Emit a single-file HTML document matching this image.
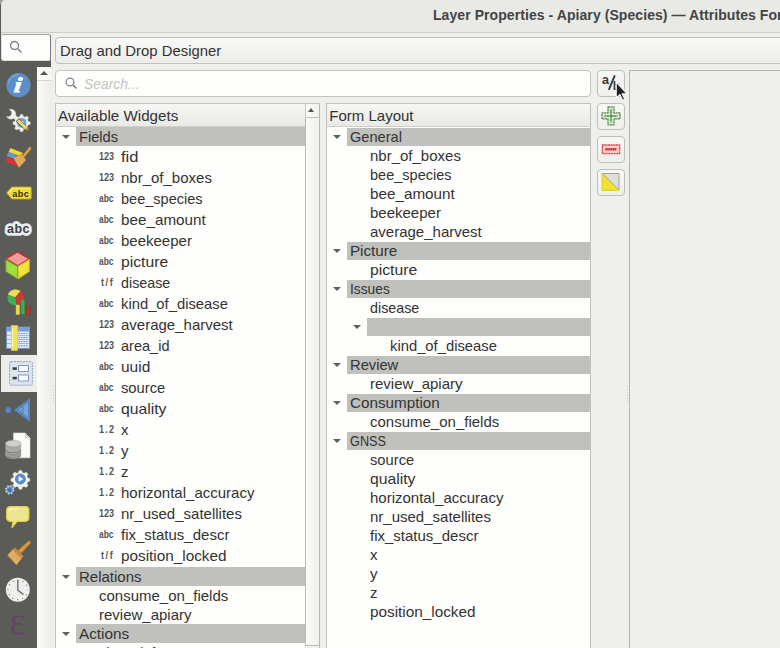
<!DOCTYPE html><html><head><meta charset="utf-8"><title>Layer Properties</title><style>
*{box-sizing:border-box;margin:0;padding:0}
html,body{width:780px;height:648px;overflow:hidden}
body{background:#efefec;font-family:"Liberation Sans",sans-serif;font-size:15px;color:#333;position:relative}
.abs{position:absolute}
.t{position:absolute;white-space:nowrap;line-height:20px;height:20px;transform-origin:0 50%}
.g{position:absolute;background:#c0c0bd}
.ic{position:absolute;font-size:10.3px;font-weight:bold;color:#555;line-height:20px;height:20px;transform-origin:0 50%;transform:scaleX(0.88)}
.ic.a{font-size:10px;transform:scaleX(0.84)}
.ic.d{letter-spacing:1.35px}
.ic.f{letter-spacing:1.8px}
.arr{position:absolute;width:0;height:0;border-left:4px solid transparent;border-right:4px solid transparent;border-top:4.5px solid #5e5e5c}
.btn{position:absolute;width:28px;height:27px;border:1px solid #bebeba;border-radius:4px;background:linear-gradient(#f7f7f5,#efefec)}
svg{position:absolute;overflow:visible}
</style></head><body>
<div class="abs" style="left:0;top:0;width:8px;height:60px;background:#5a5a58"></div>
<div class="abs" style="left:0;top:0;width:6px;height:5px;background:linear-gradient(135deg,#a0a0a0 35%,#555 55%)"></div>
<div class="abs" style="left:1px;top:0;width:779px;height:33px;background:#e9e9e6;border-top-left-radius:4px 5px;border-bottom:1px solid #cdcdc9"></div>
<div class="abs" style="left:1px;top:33px;width:8px;height:2px;background:#efefec"></div>
<div class="t" style="left:433px;top:5px;font-size:14px;font-weight:bold;color:#444;letter-spacing:0.07px">Layer Properties - Apiary (Species) — Attributes Form</div>
<div class="abs" style="left:0;top:60px;width:51px;height:7px;background:#5b5b58"></div>
<div class="abs" style="left:0;top:60px;width:37px;height:588px;background:#5b5b58"></div>
<div class="abs" style="left:1px;top:33.5px;width:50px;height:27px;background:#fdfdfb;border:1px solid #e0e0dc;border-top-color:#a0a09d;border-right-color:#777;border-radius:2px 2px 3px 3px"></div>
<svg style="left:9.1px;top:40.3px" width="14" height="14" viewBox="0 0 14 14"><circle cx="5.5" cy="5.5" r="4" fill="none" stroke="#808080" stroke-width="1.3"/><path d="M8.5 8.5L12.5 12.5" stroke="#808080" stroke-width="1.6"/></svg>
<div class="abs" style="left:37px;top:67px;width:15px;height:581px;background:linear-gradient(90deg,#fcfcfa,#f3f3f0 60%,#ececea)"></div>
<div class="abs" style="left:37px;top:67px;width:15px;height:14px;background:linear-gradient(90deg,#fcfcfa,#f3f3f0);border-bottom:1px solid #d8d8d4"></div>
<div class="abs" style="left:40px;top:71px;width:0;height:0;border-left:4px solid transparent;border-right:4px solid transparent;border-bottom:4px solid #555"></div>
<div class="abs" style="left:53px;top:386px;width:1px;height:17px;background:repeating-linear-gradient(#c4c4c0 0 1px,transparent 1px 3px)"></div>
<div class="abs" style="left:55px;top:37px;width:760px;height:27px;border:1px solid #c0c0bc;border-radius:4px;background:linear-gradient(#fafaf8,#ecece9)"></div>
<div class="t" style="left:60.3px;top:40.5px;transform:scaleX(0.992)">Drag and Drop Designer</div>
<div class="abs" style="left:55px;top:70px;width:536px;height:27px;border:1px solid #c2c2be;border-radius:4px;background:#fefefc"></div>
<svg style="left:64.300px;top:75.500px" width="14" height="14" viewBox="0 0 14 14"><circle cx="6" cy="6" r="3.900" fill="none" stroke="#858585" stroke-width="1.250"/><path d="M8.900 8.900L12.400 12.400" stroke="#858585" stroke-width="1.600"/></svg>
<div class="t" style="left:84px;top:74px;font-style:italic;color:#c4c4c1;transform:scaleX(0.925)">Search...</div>
<div class="abs" style="left:55px;top:103px;width:265px;height:560px;background:#fefefc;border:1px solid #c0c0bc"></div>
<div class="abs" style="left:56px;top:104px;width:249px;height:23px;background:linear-gradient(#f7f7f5,#e9e9e6);border-bottom:1px solid #cfcfcb"></div>
<div class="t" style="left:58px;top:106px;transform:scaleX(1.011)">Available Widgets</div>
<div class="abs" style="left:305px;top:104px;width:14px;height:544px;background:#f0f0ed"></div>
<div class="abs" style="left:305px;top:104px;width:14px;height:14px;background:linear-gradient(90deg,#fbfbf9,#f1f1ee);border-left:1px solid #c6c6c2;border-bottom:1px solid #c2c2be"></div>
<div class="abs" style="left:308.3px;top:108px;width:0;height:0;border-left:3.75px solid transparent;border-right:3.75px solid transparent;border-bottom:4px solid #555"></div>
<div class="abs" style="left:305px;top:118px;width:14px;height:528px;background:linear-gradient(90deg,#fbfbf9,#f0f0ed);border-left:1px solid #b8b8b4;border-bottom:1px solid #b8b8b4"></div>
<div class="abs" style="left:319px;top:104px;width:1px;height:544px;background:#b8b8b4"></div>
<div class="g" style="left:76px;top:127.25px;width:229px;height:18.5px"></div>
<div class="arr" style="left:62px;top:134.75px"></div>
<div class="t" style="left:79px;top:127.5px;line-height:18.5px;height:18.5px;transform:scaleX(0.975)">Fields</div>
<div class="ic" style="left:99.3px;top:147.1px">123</div>
<div class="t" style="left:121px;top:147.1px;transform:scaleX(1.105)">fid</div>
<div class="ic" style="left:99.3px;top:168.1px">123</div>
<div class="t" style="left:121px;top:168.1px">nbr_of_boxes</div>
<div class="ic a" style="left:99.3px;top:189.1px">abc</div>
<div class="t" style="left:121px;top:189.1px;transform:scaleX(0.969)">bee_species</div>
<div class="ic a" style="left:99.3px;top:210.1px">abc</div>
<div class="t" style="left:121px;top:210.1px;transform:scaleX(1.016)">bee_amount</div>
<div class="ic a" style="left:99.3px;top:231.1px">abc</div>
<div class="t" style="left:121px;top:231.1px">beekeeper</div>
<div class="ic a" style="left:99.3px;top:252.1px">abc</div>
<div class="t" style="left:121px;top:252.1px;transform:scaleX(1.049)">picture</div>
<div class="ic f" style="left:101px;top:273.1px">t/f</div>
<div class="t" style="left:121px;top:273.1px;transform:scaleX(0.953)">disease</div>
<div class="ic a" style="left:99.3px;top:294.1px">abc</div>
<div class="t" style="left:121px;top:294.1px;transform:scaleX(0.986)">kind_of_disease</div>
<div class="ic" style="left:99.3px;top:315.1px">123</div>
<div class="t" style="left:121px;top:315.1px">average_harvest</div>
<div class="ic" style="left:99.3px;top:336.1px">123</div>
<div class="t" style="left:121px;top:336.1px;transform:scaleX(0.969)">area_id</div>
<div class="ic a" style="left:99.3px;top:357.1px">abc</div>
<div class="t" style="left:121px;top:357.1px;transform:scaleX(1.031)">uuid</div>
<div class="ic a" style="left:99.3px;top:378.1px">abc</div>
<div class="t" style="left:121px;top:378.1px;transform:scaleX(0.983)">source</div>
<div class="ic a" style="left:99.3px;top:399.1px">abc</div>
<div class="t" style="left:121px;top:399.1px;transform:scaleX(1.049)">quality</div>
<div class="ic d" style="left:99.3px;top:420.1px">1.2</div>
<div class="t" style="left:121px;top:420.1px">x</div>
<div class="ic d" style="left:99.3px;top:441.1px">1.2</div>
<div class="t" style="left:121px;top:441.1px">y</div>
<div class="ic d" style="left:99.3px;top:462.1px">1.2</div>
<div class="t" style="left:121px;top:462.1px">z</div>
<div class="ic d" style="left:99.3px;top:483.1px">1.2</div>
<div class="t" style="left:121px;top:483.1px">horizontal_accuracy</div>
<div class="ic" style="left:99.3px;top:504.1px">123</div>
<div class="t" style="left:121px;top:504.1px">nr_used_satellites</div>
<div class="ic a" style="left:99.3px;top:525.1px">abc</div>
<div class="t" style="left:121px;top:525.1px">fix_status_descr</div>
<div class="ic f" style="left:101px;top:546.1px">t/f</div>
<div class="t" style="left:121px;top:546.1px;transform:scaleX(1.02)">position_locked</div>
<div class="g" style="left:76px;top:567.25px;width:229px;height:18.5px"></div>
<div class="arr" style="left:62px;top:574.75px"></div>
<div class="t" style="left:79px;top:567.5px;line-height:18.5px;height:18.5px">Relations</div>
<div class="t" style="left:99px;top:585.5px">consume_on_fields</div>
<div class="t" style="left:99px;top:604.5px">review_apiary</div>
<div class="g" style="left:76px;top:624.25px;width:229px;height:18.5px"></div>
<div class="arr" style="left:62px;top:631.75px"></div>
<div class="t" style="left:79px;top:624.5px;line-height:18.5px;height:18.5px;transform:scaleX(1.02)">Actions</div>
<div class="t" style="left:99px;top:642.5px;transform:scaleX(0.95)">show_info</div>
<div class="abs" style="left:326px;top:103px;width:265px;height:560px;background:#fefefc;border:1px solid #c0c0bc"></div>
<div class="abs" style="left:327px;top:104px;width:263px;height:23px;background:linear-gradient(#f7f7f5,#e9e9e6);border-bottom:1px solid #cfcfcb"></div>
<div class="t" style="left:329.3px;top:106px">Form Layout</div>
<div class="g" style="left:347px;top:127.65px;width:243px;height:18.5px"></div>
<div class="arr" style="left:333px;top:135.15px"></div>
<div class="t" style="left:350px;top:127.9px;line-height:18.5px;height:18.5px;transform:scaleX(0.974)">General</div>
<div class="t" style="left:370px;top:145.9px">nbr_of_boxes</div>
<div class="t" style="left:370px;top:164.9px;transform:scaleX(0.969)">bee_species</div>
<div class="t" style="left:370px;top:183.9px;transform:scaleX(1.016)">bee_amount</div>
<div class="t" style="left:370px;top:202.9px">beekeeper</div>
<div class="t" style="left:370px;top:221.9px">average_harvest</div>
<div class="g" style="left:347px;top:241.65px;width:243px;height:18.5px"></div>
<div class="arr" style="left:333px;top:249.15px"></div>
<div class="t" style="left:350px;top:241.9px;line-height:18.5px;height:18.5px;transform:scaleX(1.012)">Picture</div>
<div class="t" style="left:370px;top:259.9px;transform:scaleX(1.049)">picture</div>
<div class="g" style="left:347px;top:279.65px;width:243px;height:18.5px"></div>
<div class="arr" style="left:333px;top:287.15px"></div>
<div class="t" style="left:350px;top:279.9px;line-height:18.5px;height:18.5px;transform:scaleX(0.917)">Issues</div>
<div class="t" style="left:370px;top:297.9px;transform:scaleX(0.953)">disease</div>
<div class="g" style="left:367px;top:317.65px;width:223px;height:18.5px"></div>
<div class="arr" style="left:353px;top:325.15px"></div>
<div class="t" style="left:370px;top:317.9px;line-height:18.5px;height:18.5px"></div>
<div class="t" style="left:390px;top:335.9px;transform:scaleX(0.986)">kind_of_disease</div>
<div class="g" style="left:347px;top:355.65px;width:243px;height:18.5px"></div>
<div class="arr" style="left:333px;top:363.15px"></div>
<div class="t" style="left:350px;top:355.9px;line-height:18.5px;height:18.5px;transform:scaleX(0.981)">Review</div>
<div class="t" style="left:370px;top:373.9px">review_apiary</div>
<div class="g" style="left:347px;top:393.65px;width:243px;height:18.5px"></div>
<div class="arr" style="left:333px;top:401.15px"></div>
<div class="t" style="left:350px;top:393.9px;line-height:18.5px;height:18.5px;transform:scaleX(1.015)">Consumption</div>
<div class="t" style="left:370px;top:411.9px">consume_on_fields</div>
<div class="g" style="left:347px;top:431.65px;width:243px;height:18.5px"></div>
<div class="arr" style="left:333px;top:439.15px"></div>
<div class="t" style="left:350px;top:431.9px;line-height:18.5px;height:18.5px;transform:scaleX(0.847)">GNSS</div>
<div class="t" style="left:370px;top:449.9px;transform:scaleX(0.983)">source</div>
<div class="t" style="left:370px;top:468.9px;transform:scaleX(1.049)">quality</div>
<div class="t" style="left:370px;top:487.9px">horizontal_accuracy</div>
<div class="t" style="left:370px;top:506.9px">nr_used_satellites</div>
<div class="t" style="left:370px;top:525.9px">fix_status_descr</div>
<div class="t" style="left:370px;top:544.9px">x</div>
<div class="t" style="left:370px;top:563.9px">y</div>
<div class="t" style="left:370px;top:582.9px">z</div>
<div class="t" style="left:370px;top:601.9px;transform:scaleX(1.02)">position_locked</div>
<div class="abs" style="left:627px;top:386px;width:1px;height:17px;background:repeating-linear-gradient(#c4c4c0 0 1px,transparent 1px 3px)"></div>
<div class="btn" style="left:597px;top:70px"></div>
<div class="btn" style="left:597px;top:103px"></div>
<div class="btn" style="left:597px;top:136px"></div>
<div class="btn" style="left:597px;top:169px"></div>
<div class="abs" style="left:629px;top:70px;width:200px;height:600px;border:1px solid #b4b4b0"></div>
<!-- toolbar button icons -->
<svg style="left:597px;top:70px" width="34" height="34" viewBox="0 0 34 34">
 <text x="5" y="13.700" font-family="Liberation Sans, sans-serif" font-weight="bold" font-size="12.500px" fill="#3a3a3a">a</text>
 <path d="M17.800 5.400L11.800 19.800" stroke="#3a3a3a" stroke-width="1.900"/>
 <text x="15.800" y="19.600" font-family="Liberation Sans, sans-serif" font-weight="bold" font-size="12px" fill="#3a3a3a">b</text>
 <path d="M19.2 12V28L22.8 24.6L25.6 30.4L27.8 29.4L25.2 23.800H30.2Z" fill="#222" stroke="#f6f6f6" stroke-width="1.2" stroke-linejoin="round"/>
</svg>
<svg style="left:597px;top:103px" width="28" height="27" viewBox="0 0 28 27">
 <path d="M11 3.900h6v6h6v6h-6v6h-6v-6h-6v-6h6z" fill="#dfe5d8" stroke="#5f8a52" stroke-width="1.300" stroke-linejoin="round" stroke-dasharray="2.200 0.500"/>
 <path d="M14 6.400v13M7.500 12.900h13" stroke="#3f9640" stroke-width="1.500" stroke-dasharray="2 0.400"/>
</svg>
<svg style="left:597px;top:136px" width="28" height="27" viewBox="0 0 28 27">
 <rect x="5.400" y="9" width="17.200" height="8.600" fill="#f6cfcf" stroke="#df4a4a" stroke-width="1.400" stroke-dasharray="2.200 0.500"/>
 <path d="M8.300 13.300h11.400" stroke="#d62f2f" stroke-width="2.600" stroke-dasharray="1.600 0.300"/>
</svg>
<svg style="left:597px;top:169px" width="28" height="27" viewBox="0 0 28 27">
 <path d="M5.5 4.5H22V21Z" fill="#dededb" stroke="#a0a09c" stroke-width="1"/>
 <path d="M5 4.5V21.5H22Z" fill="#f0e22e" stroke="#d8c93a" stroke-width="0.8"/>
</svg>
<!-- sidebar icons -->
<!-- 1 info -->
<svg style="left:5.600px;top:73px" width="25" height="25" viewBox="0 0 25 25">
 <circle cx="12.500" cy="12.200" r="12.100" fill="#5c8fc8"/>
 <path d="M2.300 10A10.600 10.600 0 0 1 12.500 1.600" fill="none" stroke="#a9c6e6" stroke-width="0.900" stroke-dasharray="1.500 1"/>
 <text x="0" y="0" font-family="Liberation Serif, serif" font-style="italic" font-weight="bold" font-size="21px" fill="#fff" stroke="#fff" stroke-width="0.900" transform="translate(7.500 19.300) skewX(-8) scale(1.200 1)">i</text>
</svg>
<!-- 2 wrench + gear -->
<svg style="left:5px;top:108px" width="27" height="27" viewBox="0 0 27 27">
 <g transform="translate(16.600,14.800) scale(0.77)">
  <path d="M-1.600 -10.800h3.200l.7 2.600 2.200 .9 2.300-1.400 2.300 2.300-1.400 2.300 .9 2.200 2.600 .7v3.200l-2.600 .7-.9 2.200 1.400 2.300-2.300 2.300-2.300-1.400-2.200 .9-.7 2.600h-3.200l-.7-2.600-2.200-.9-2.300 1.400-2.300-2.300 1.400-2.300-.9-2.200-2.600-.7v-3.200l2.600-.7 .9-2.200-1.400-2.300 2.300-2.300 2.300 1.400 2.200-.9z" fill="#f0f0ee" stroke="#c9c9c7" stroke-width="0.600"/>
  <circle r="6.300" fill="#6f9fd6"/>
  <circle r="2.600" fill="#e6e6e4"/>
 </g>
 <path d="M8 7.500L13.500 12.800" stroke="#ededeb" stroke-width="3.200"/>
 <path d="M4 1.600A5 5 0 1 1 1.300 8.200A3.600 3.600 0 1 0 4 1.600z" fill="#f3f3f1" stroke="#d6d6d4" stroke-width="0.400"/>
 <path d="M12.300 12L22.600 21.600" stroke="#3a3a30" stroke-width="4"/>
 <path d="M12.800 12.400L21.600 20.700" stroke="#f0dc6a" stroke-width="3.100"/>
 <path d="M21.400 20.500L23 22" stroke="#c98a2a" stroke-width="2.600"/>
</svg>
<!-- 3 paint brush with colours -->
<svg style="left:4px;top:145px" width="28" height="26" viewBox="0 0 28 26">
 <path d="M6.500 3L19 8 17 11.500 4.500 7z" fill="#f0da30"/>
 <path d="M4.500 7L12 10 10.500 13.800 2.500 11z" fill="#5d9ad6"/>
 <path d="M2.500 11.800L9.500 14.500 15 21.500 6 18.500 2 16z" fill="#dc3434"/>
 <path d="M18.500 12.500L26 3.300" stroke="#dc9c38" stroke-width="2.700" stroke-linecap="round"/>
 <path d="M9.500 13L17 8.500 22 15 15 22.800z" fill="#dfa758"/>
 <path d="M11 13.500l5.500 7M13.500 12l5 6.500" stroke="#ecc07c" stroke-width="0.700" stroke-dasharray="1 1"/>
</svg>
<!-- 4 label tag abc -->
<svg style="left:5.800px;top:185.800px" width="25.800" height="14.400" viewBox="0 0 27 15" preserveAspectRatio="none">
 <path d="M0.600 7.300L6 1h19.500a1 1 0 0 1 1 1v10.600a1 1 0 0 1-1 1H6z" fill="#f2dc3c" stroke="#b79c1e" stroke-width="1"/>
 <path d="M2.300 7.300L6.500 2.400h18.500" fill="none" stroke="#fbf0a0" stroke-width="0.9"/>
 <text x="6.600" y="11.200" font-family="Liberation Sans, sans-serif" font-weight="bold" font-size="9.600px" fill="#33301a" letter-spacing="0.350">abc</text>
</svg>
<!-- 5 abc halo -->
<svg style="left:3.600px;top:220.200px" width="28" height="16" viewBox="0 0 28 16">
 <text x="3" y="12.600" font-family="Liberation Sans, sans-serif" font-weight="bold" font-size="12.500px" fill="#e9ecf2" stroke="#e9ecf2" stroke-width="5.400" stroke-linejoin="round" letter-spacing="0.500">abc</text>
 <text x="3" y="12.600" font-family="Liberation Sans, sans-serif" font-weight="bold" font-size="12.500px" fill="#404040" letter-spacing="0.500">abc</text>
</svg>
<!-- 6 cube -->
<svg style="left:5px;top:251px" width="26" height="29" viewBox="0 0 26 29">
 <path d="M12.500 1L24.300 7.800 12.800 14.800 0.800 7.800z" fill="#f59a9a" stroke="#c82828" stroke-width="1.300" stroke-linejoin="round"/>
 <path d="M0.800 8.500L12.600 15.300V28L0.800 20.500z" fill="#9ed844" stroke="#5aa028" stroke-width="1" stroke-linejoin="round"/>
 <path d="M3.500 12l7 4v8.500l-7-4.400z" fill="#a8dc40"/>
 <path d="M24.300 8.500L13 15.300V28L24.300 20.500z" fill="#f2e23e" stroke="#c9b422" stroke-width="1" stroke-linejoin="round"/>
</svg>
<!-- 7 diagrams -->
<svg style="left:5px;top:288px" width="27" height="28" viewBox="0 0 27 28">
 <circle cx="10.400" cy="9.400" r="8" fill="#3fb052"/>
 <path d="M10.400 9.400L2.900 6.700A8 8 0 0 1 15.500 3.300z" fill="#f0dc52"/>
 <path d="M10.400 9.400L15.500 3.300A8 8 0 0 1 11.800 17.300z" fill="#d43636"/>
 <path d="M10.400 9.400L2.900 6.700M10.400 9.400L11.800 17.300M10.400 9.400L15.500 3.300" stroke="#7a3a28" stroke-width="0.500" opacity="0.600"/>
 <rect x="11" y="17" width="3.600" height="9.600" fill="#f0dc52" stroke="#cdb434" stroke-width="0.500"/>
 <rect x="16" y="11.700" width="3.600" height="14.500" fill="#3fb052" stroke="#2c8c3c" stroke-width="0.500"/>
 <rect x="21.300" y="19" width="3.600" height="7.200" fill="#c93030" stroke="#9c2222" stroke-width="0.500"/>
</svg>
<!-- 8 source fields table -->
<svg style="left:6px;top:324.500px" width="24" height="26" viewBox="0 0 24 26">
 <rect x="0.500" y="2" width="23" height="21.500" fill="#dfe8f4" stroke="#6e93c4" stroke-width="1"/>
 <rect x="0.500" y="2" width="23" height="4.500" fill="#7a9fd0"/>
 <path d="M1 10.500h22M1 14.500h22M1 18.500h22" stroke="#8eaad2" stroke-width="0.800"/>
 <path d="M12.500 8.500h9M12.500 12.500h9M12.500 16.500h9M12.500 20.800h9" stroke="#6f8fc0" stroke-width="1.200" stroke-dasharray="1.500 1"/>
 <rect x="5.300" y="0.500" width="6.200" height="25" fill="#f0e456" stroke="#dccf3c" stroke-width="0.600"/>
 <path d="M6.500 4v19" stroke="#fbf6a8" stroke-width="1"/>
</svg>
<!-- 9 selected: attributes form -->
<div class="abs" style="left:1px;top:355px;width:36px;height:37px;background:#ededea"></div>
<svg style="left:9px;top:361px" width="24" height="25" viewBox="0 0 24 25">
 <rect x="0.600" y="0.600" width="22.800" height="23.600" rx="1.500" fill="#dde4ee" stroke="#8a9fc0" stroke-width="1" stroke-dasharray="2 1"/>
 <rect x="9.500" y="4.500" width="10" height="6" fill="#fdfdfd" stroke="#7f9ac4" stroke-width="1"/>
 <rect x="9.500" y="14" width="10" height="6" fill="#fdfdfd" stroke="#7f9ac4" stroke-width="1"/>
 <rect x="3.600" y="6.300" width="4.200" height="2.600" fill="#3c3c3c"/>
 <rect x="3.600" y="15.800" width="4.200" height="2.600" fill="#3c3c3c"/>
</svg>
<!-- 10 joins -->
<svg style="left:4px;top:397px" width="28" height="26" viewBox="0 0 28 26">
 <circle cx="4.200" cy="13" r="2.900" fill="#5585c2"/>
 <path d="M9.800 13L26 1.200V24.800z" fill="#5686c3"/>
 <path d="M14.500 13L24 5.500V20.500z" fill="#78a4d8"/>
 <path d="M17 9.500l3 2-3 2 3 2-3 2" fill="none" stroke="#4a78b4" stroke-width="0.900"/>
</svg>
<!-- 11 auxiliary storage -->
<svg style="left:5px;top:432px" width="26" height="28" viewBox="0 0 26 28">
 <path d="M8.500 1H20l5 5v19.800H8.500z" fill="#fbfbfa" stroke="#e0e0de" stroke-width="0.600"/>
 <path d="M20 1v5h5z" fill="#d0d0ce"/>
 <path d="M0.500 11.500v12a7.800 3.300 0 0 0 15.600 0v-12z" fill="#a9a9a7"/>
 <path d="M0.500 17.100a7.800 3.300 0 0 0 15.600 0v0.700a7.800 3.300 0 0 1-15.600 0z" fill="#6e6e6c"/>
 <path d="M0.500 19a7.800 3.300 0 0 0 15.600 0v4.500a7.800 3.300 0 0 1-15.600 0z" fill="#8e8e8c"/>
 <path d="M0.500 21a7.800 3.300 0 0 0 15.600 0" fill="none" stroke="#bdbdbb" stroke-width="0.600"/>
 <ellipse cx="8.300" cy="11.500" rx="7.800" ry="3.300" fill="#cfcfcd" stroke="#9a9a98" stroke-width="0.500"/>
</svg>
<!-- 12 actions -->
<svg style="left:4px;top:467px" width="28" height="29" viewBox="0 0 28 29">
 <g transform="translate(16.400,12) scale(0.86)">
  <path d="M-1.700 -10h3.400l.6 2.400 2.100 .9 2.200-1.300 2.400 2.400-1.300 2.200 .9 2.100 2.400 .6v3.400l-2.400 .6-.9 2.100 1.300 2.200-2.400 2.400-2.200-1.300-2.100 .9-.6 2.400h-3.400l-.6-2.400-2.100-.9-2.200 1.300-2.400-2.400 1.300-2.200-.9-2.100-2.400-.6v-3.400l2.400-.6 .9-2.100-1.300-2.200 2.400-2.400 2.200 1.300 2.100-.9z" fill="#f1f1ef" stroke="#c6c6c4" stroke-width="0.500"/>
  <circle r="5.800" fill="#5b8fd0" stroke="#3f6fae" stroke-width="0.800"/>
  <path d="M-2 -3.200L3.300 0-2 3.200z" fill="#fff"/>
 </g>
 <g transform="translate(5.700,22.800)">
  <circle r="3.800" fill="#5b8fd0" stroke="#d4dce8" stroke-width="1.700" stroke-dasharray="1.700 1.280"/>
  <circle r="1.600" fill="#3f6aa8"/>
 </g>
</svg>
<!-- 13 display / map tips -->
<svg style="left:6px;top:506px" width="24" height="23" viewBox="0 0 24 23">
 <path d="M4 0.700h15.500a3.300 3.300 0 0 1 3.300 3.300v8a3.300 3.300 0 0 1-3.300 3.300H11L6 21.500 7.200 15.300H4A3.300 3.300 0 0 1 0.700 12V4A3.300 3.300 0 0 1 4 0.700z" fill="#ece590" stroke="#e2d44e" stroke-width="1.300" stroke-linejoin="round"/>
 <path d="M3 5.500a2.500 2.500 0 0 1 2.500-2.500H12" fill="none" stroke="#faf6c8" stroke-width="1.200"/>
</svg>
<!-- 14 rendering brush -->
<svg style="left:7px;top:540px" width="25" height="27" viewBox="0 0 25 27">
 <path d="M11 10.500L22 0.700 24 2.700 14 13.500z" fill="#d9963a" stroke="#b47a24" stroke-width="0.500"/>
 <path d="M7.800 7.500l8.800 8.800-2.400 2.400-8.800-8.800z" fill="#c98a3a"/>
 <path d="M5.800 9.500l8.800 8.800L9.500 25 0.500 15.200z" fill="#e2b066" stroke="#c08a3a" stroke-width="0.600"/>
 <path d="M3 15.500l5 5.500M5 13.500l5.500 6M7 12l5.500 6" stroke="#c6924a" stroke-width="0.600"/>
</svg>
<!-- 15 temporal clock -->
<svg style="left:5px;top:577px" width="26" height="26" viewBox="0 0 26 26">
 <circle cx="12.800" cy="12.800" r="12" fill="#efefed"/>
 <circle cx="12.800" cy="12.800" r="9.800" fill="none" stroke="#77777a" stroke-width="1.200" stroke-dasharray="1 4.130" stroke-dashoffset="0.500"/>
 <path d="M12.800 3.500v9.600l5.200 4" fill="none" stroke="#77777a" stroke-width="1.500" stroke-linecap="round" stroke-linejoin="round"/>
</svg>
<!-- 16 variables epsilon -->
<svg style="left:8px;top:612px" width="20" height="26" viewBox="0 0 20 26">
 <text x="1.5" y="23.3" font-family="Liberation Serif, DejaVu Serif, serif" font-size="42px" fill="#644562" transform="scale(0.92 1)">ε</text>
</svg>

</body></html>
